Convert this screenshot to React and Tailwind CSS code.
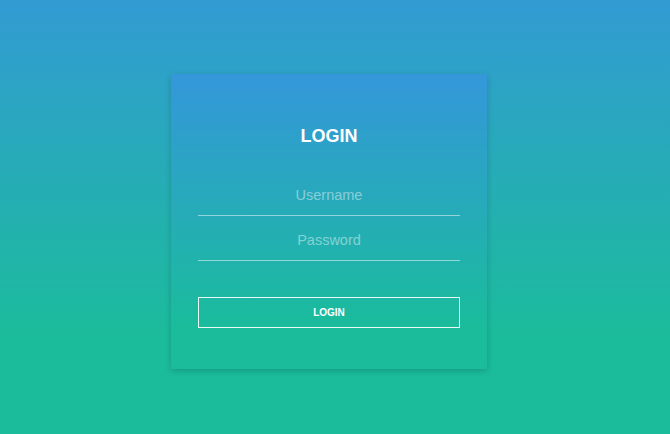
export default function App() {
  return (
    <div
      className="min-h-[434px] w-full flex justify-center pt-[74px] pr-[12px] bg-[linear-gradient(to_bottom,#329bd3_0%,#1bbc9b_78%,#1abc9c_100%)]"
      style={{ fontFamily: '"Liberation Sans", Arial, sans-serif' }}
    >
      <div className="w-[316px] h-[295px] px-[27px] pt-[52px] rounded-[2px] bg-[linear-gradient(to_bottom,#3497da,#1abc9c_85%)] shadow-[0_2px_6px_rgba(0,0,0,0.18)]">
        <h1 className="text-center text-white font-bold text-[18px] leading-[20px]">LOGIN</h1>
        <form className="flex flex-col" onSubmit={(e) => e.preventDefault()}>
          <input
            type="text"
            placeholder="Username"
            className="mt-[29px] h-[41px] w-full bg-transparent border-b border-white/50 text-center text-white text-[14.5px] outline-none placeholder:text-white/45"
          />
          <input
            type="password"
            placeholder="Password"
            className="mt-[4px] h-[41px] w-full bg-transparent border-b border-white/50 text-center text-white text-[14.5px] outline-none placeholder:text-white/45"
          />
          <button
            type="submit"
            className="mt-[36px] h-[31px] w-full border border-white/90 bg-transparent text-white font-bold text-[10px]"
          >
            LOGIN
          </button>
        </form>
      </div>
    </div>
  )
}
